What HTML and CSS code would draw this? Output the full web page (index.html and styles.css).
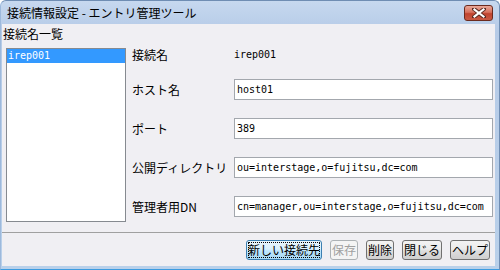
FILE: index.html
```html
<!DOCTYPE html>
<html lang="ja">
<head>
  <meta charset="UTF-8" />
  <title>接続情報設定 - エントリ管理ツール</title>
  <link rel="stylesheet" href="styles.css">
</head>
<body>
  <div class="window">
    <div class="titlebar">
      <span class="title">接続情報設定 - エントリ管理ツール</span>
      <button class="close-btn" aria-label="閉じる">
        <svg width="14" height="10" viewBox="0 0 14 10">
          <path d="M2 1 L12 9 M12 1 L2 9" stroke="#5a2a20" stroke-width="4" stroke-linecap="square"/>
          <path d="M2.5 1.5 L11.5 8.5 M11.5 1.5 L2.5 8.5" stroke="#ffffff" stroke-width="2.2" stroke-linecap="square"/>
        </svg>
      </button>
    </div>

    <div class="client">
      <div class="list-caption">接続名一覧</div>

      <div class="main">
        <ul class="conn-list">
          <li class="selected">irep001</li>
        </ul>

        <div class="form">
          <span class="label">接続名</span>
          <span class="value">irep001</span>

          <label class="label" for="host">ホスト名</label>
          <input class="field" id="host" type="text" value="host01">

          <label class="label" for="port">ポート</label>
          <input class="field" id="port" type="text" value="389">

          <label class="label" for="basedn">公開ディレクトリ</label>
          <input class="field" id="basedn" type="text" value="ou=interstage,o=fujitsu,dc=com">

          <label class="label" for="admindn">管理者用DN</label>
          <input class="field" id="admindn" type="text" value="cn=manager,ou=interstage,o=fujitsu,dc=com">
        </div>
      </div>

      <div class="separator"></div>

      <div class="buttons">
        <button class="btn focused">新しい接続先</button>
        <button class="btn" disabled>保存</button>
        <button class="btn">削除</button>
        <button class="btn">閉じる</button>
        <button class="btn">ヘルプ</button>
      </div>
    </div>
  </div>
</body>
</html>
```

FILE: styles.css
```css
body {
  margin: 0;
  background-color: #ffffff;
  font-family: "Noto Sans CJK JP", sans-serif;
  font-size: 12px;
  color: #000000;
}

.window {
  width: 500px;
  height: 270px;
  box-sizing: border-box;
  display: flex;
  flex-direction: column;
  background: linear-gradient(#c6d8ef, #b6cbe7 30px, #b9d0ea);
  border: 1px solid #6f8db3;
  border-left-color: #9db9dc;
  border-bottom-color: #3d9be0;
  border-radius: 6px 6px 0 0;
}

/* Title bar */
.titlebar {
  height: 23px;
  display: flex;
  align-items: flex-start;
  justify-content: space-between;
}

.title {
  padding-left: 6px;
  line-height: 23px;
  font-size: 12px;
  color: #000000;
}

.close-btn {
  margin: 4px 6px 0 0;
  width: 29px;
  height: 16px;
  padding: 0;
  display: flex;
  align-items: center;
  justify-content: center;
  border: 1px solid #6b2a1e;
  border-radius: 3px;
  background: linear-gradient(#e9a898, #d7705c 45%, #c0432e 55%, #c95a44);
}

/* Client area */
.client {
  flex: 1;
  margin: 0 4px 3px 1px;
  display: flex;
  flex-direction: column;
  background-color: #f0eff3;
}

.list-caption {
  padding: 2px 0 0 1px;
  height: 16px;
  line-height: 16px;
}

.main {
  display: flex;
  margin-top: 6px;
  padding-left: 4px;
}

.conn-list {
  list-style: none;
  margin: 0;
  padding: 0;
  width: 120px;
  height: 174px;
  box-sizing: border-box;
  background-color: #ffffff;
  border: 1px solid #868a90;
}

.conn-list li {
  height: 14px;
  line-height: 14px;
  padding-left: 1px;
  font-family: "DejaVu Sans Mono", monospace;
  font-size: 10px;
}

.conn-list li.selected {
  background-color: #3399ff;
  color: #ffffff;
}

.form {
  flex: 1;
  margin-left: 6px;
  padding-right: 2px;
  display: grid;
  grid-template-columns: 102px 1fr;
  grid-template-rows: 13px 21px 21px 21px 21px;
  row-gap: 18px;
  align-items: center;
}

.label {
  line-height: 14px;
  white-space: nowrap;
}

.value {
  font-family: "DejaVu Sans Mono", monospace;
  font-size: 10px;
  line-height: 13px;
}

.field {
  height: 21px;
  box-sizing: border-box;
  margin: 0;
  padding: 0 2px;
  border: 1px solid #a3a7ad;
  background-color: #ffffff;
  font-family: "DejaVu Sans Mono", monospace;
  font-size: 10px;
  color: #000000;
  outline: none;
}

.separator {
  margin-top: 10px;
  border-top: 1px solid #a0a0a0;
}

/* Button row */
.buttons {
  display: flex;
  justify-content: flex-end;
  gap: 8px;
  margin-top: 7px;
  padding-right: 5px;
}

.btn {
  height: 20px;
  margin: 0;
  padding: 0 1px;
  font-family: "Noto Sans CJK JP", sans-serif;
  font-size: 12px;
  line-height: 16px;
  color: #000000;
  border: 1px solid #707070;
  border-radius: 3px;
  background: linear-gradient(#f3f3f3, #ebebeb 45%, #dddddd 55%, #cfcfcf);
}

.btn.focused {
  border-color: #3c7fb1;
  background: linear-gradient(#eaf6fd, #d9f0fc 45%, #bee6fd 55%, #a7d9f5);
  outline: 1px dotted #000000;
  outline-offset: -3px;
}

.btn:disabled {
  color: #a0a0a0;
  border-color: #adb2b5;
  background: #f4f4f4;
}
```
